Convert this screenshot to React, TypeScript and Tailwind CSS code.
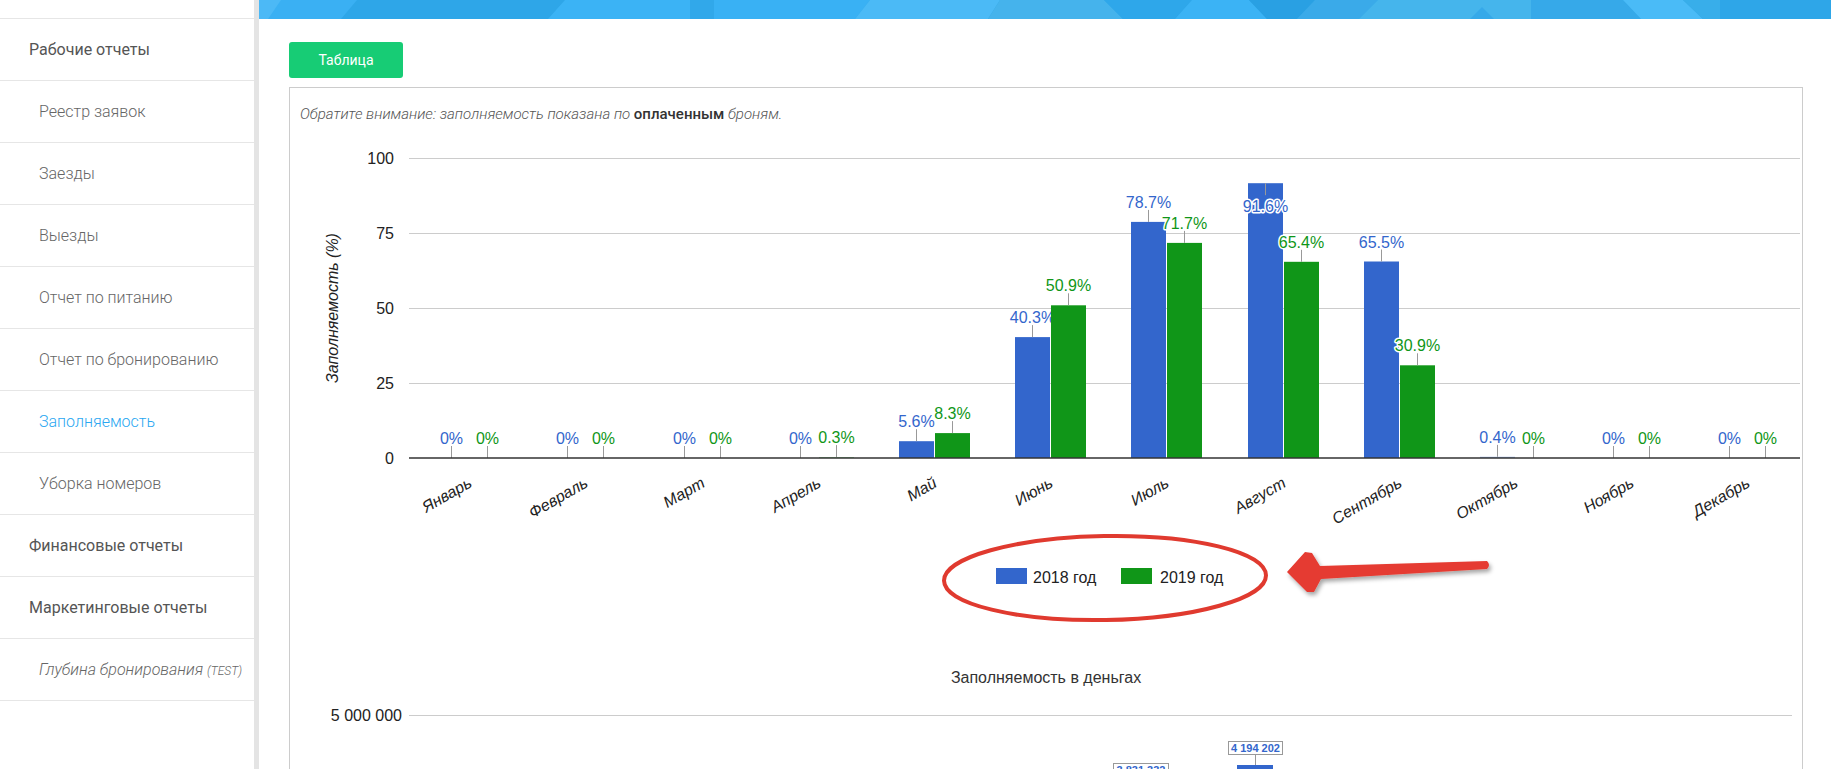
import React from "react";

const months = ["Январь","Февраль","Март","Апрель","Май","Июнь","Июль","Август","Сентябрь","Октябрь","Ноябрь","Декабрь"];
const d2018 = [0,0,0,0,5.6,40.3,78.7,91.6,65.5,0.4,0,0];
const d2019 = [0,0,0,0.3,8.3,50.9,71.7,65.4,30.9,0,0,0];
const BLUE = "#3366cc";
const GREEN = "#109618";
const BASE = 458;
const SX = 411;
const SW = 116.2;
const CF = '"Liberation Sans", Arial, sans-serif';

type NavItem = { t: string; h?: boolean; active?: boolean; test?: boolean };
const nav: NavItem[] = [
  { t: "Рабочие отчеты", h: true },
  { t: "Реестр заявок" },
  { t: "Заезды" },
  { t: "Выезды" },
  { t: "Отчет по питанию" },
  { t: "Отчет по бронированию" },
  { t: "Заполняемость", active: true },
  { t: "Уборка номеров" },
  { t: "Финансовые отчеты", h: true },
  { t: "Маркетинговые отчеты", h: true },
  { t: "Глубина бронирования", test: true },
];

const bannerPolys: [string, string][] = [
  ["259,0 357,0 341,19 259,19", "#3ab0f3"],
  ["259,0 281,0 268,19 259,19", "#4cb9f6"],
  ["565,0 690,0 690,19 548,19", "#3bb3f5"],
  ["690,0 714,0 714,19 690,19", "#31a8ea"],
  ["714,0 870,0 855,19 714,19", "#39b1f4"],
  ["870,0 1000,0 988,19 855,19", "#4bbaf6"],
  ["1000,0 1104,0 1123,19 988,19", "#45b3ec"],
  ["1104,0 1192,0 1175,19 1123,19", "#2ea7ea"],
  ["1192,0 1249,0 1267,19 1175,19", "#3bb3f5"],
  ["1249,0 1315,0 1297,19 1267,19", "#29a0e3"],
  ["1315,0 1378,0 1359,19 1297,19", "#3aaae9"],
  ["1378,0 1531,0 1531,19 1359,19", "#45b5ec"],
  ["1482,7 1494,19 1470,19", "#36a9e9"],
  ["1531,0 1623,0 1641,19 1531,19", "#36a9e9"],
  ["1623,0 1683,0 1703,19 1641,19", "#4abbf7"],
  ["1683,0 1720,0 1720,19 1703,19", "#38aeea"],
];

function Banner() {
  return (
    <svg width={1572} height={19} className="block shrink-0">
      <g transform="translate(-259,0)">
        <rect x={259} y={0} width={1572} height={19} fill="#2ea6e8" />
        {bannerPolys.map(([p, c], i) => (
          <polygon key={i} points={p} fill={c} />
        ))}
      </g>
    </svg>
  );
}

function Label({ x, y, text, color }: { x: number; y: number; text: string; color: string }) {
  return (
    <text
      x={x}
      y={y}
      textAnchor="middle"
      fill={color}
      stroke="#fff"
      strokeWidth={3}
      strokeLinejoin="round"
      style={{ paintOrder: "stroke" }}
      fontSize={16}
      fontFamily={CF}
    >
      {text}
    </text>
  );
}

function Chart() {
  const grid = [100, 75, 50, 25];
  const els: React.ReactNode[] = [];
  months.forEach((m, i) => {
    const c = Math.round(SX + SW * (i + 0.5));
    const series = [
      { v: d2018[i], x: c - 35, color: BLUE, lc: c - 17.5 },
      { v: d2019[i], x: c + 1, color: GREEN, lc: c + 18.5 },
    ];
    series.forEach((s, k) => {
      const h = s.v * 3;
      const top = BASE - h;
      if (s.v > 0) {
        els.push(<rect key={`b${i}${k}`} x={s.x} y={top} width={35} height={h} fill={s.color} opacity={s.v < 1 ? 0.5 : 1} />);
      }
      const inside = i === 7 && k === 0;
      const t = s.v === 0 ? "0%" : `${s.v}%`;
      if (inside) {
        els.push(<line key={`t${i}${k}`} x1={s.lc} x2={s.lc} y1={top} y2={top + 12} stroke="#999" strokeWidth={1} />);
        els.push(<Label key={`l${i}${k}`} x={s.lc} y={top + 29} text={t} color={s.color} />);
      } else {
        els.push(<line key={`t${i}${k}`} x1={s.lc} x2={s.lc} y1={top - 12} y2={top} stroke="#999" strokeWidth={1} />);
        els.push(<Label key={`l${i}${k}`} x={s.lc} y={top - 14} text={t} color={s.color} />);
      }
    });
    els.push(
      <text
        key={`m${i}`}
        x={c + 4}
        y={486}
        textAnchor="end"
        fontStyle="italic"
        fontSize={16}
        fill="#222"
        fontFamily={CF}
        transform={`rotate(-30 ${c + 4} 486)`}
      >
        {m}
      </text>
    );
  });

  return (
    <svg width={1512} height={645} className="block">
      <defs>
        <filter id="shadow" x="-20%" y="-50%" width="140%" height="200%">
          <feDropShadow dx="2" dy="3" stdDeviation="2" floodColor="#000" floodOpacity="0.35" />
        </filter>
      </defs>
      <g transform="translate(-290,-124)">
        {grid.map((g) => {
          const y = BASE - g * 3 + 0.5;
          return <line key={g} x1={409} x2={1800} y1={y} y2={y} stroke="#cccccc" strokeWidth={1} />;
        })}
        {[100, 75, 50, 25, 0].map((g) => (
          <text key={`y${g}`} x={394} y={BASE - g * 3 + 6} textAnchor="end" fontSize={16} fill="#222" fontFamily={CF}>
            {g}
          </text>
        ))}
        <text
          x={338}
          y={308}
          textAnchor="middle"
          fontStyle="italic"
          fontSize={16}
          fill="#222"
          fontFamily={CF}
          transform="rotate(-90 338 308)"
        >
          Заполняемость (%)
        </text>
        {els}
        <line x1={409} x2={1800} y1={BASE} y2={BASE} stroke="#333" strokeWidth={1.5} />

        {/* legend */}
        <rect x={996} y={568} width={31} height={16} fill={BLUE} />
        <text x={1033} y={583} fontSize={16} fill="#222" fontFamily={CF}>2018 год</text>
        <rect x={1121} y={568} width={31} height={16} fill={GREEN} />
        <text x={1160} y={583} fontSize={16} fill="#222" fontFamily={CF}>2019 год</text>

        {/* annotation: ellipse + arrow */}
        <ellipse cx={1105} cy={578} rx={161} ry={42} fill="none" stroke="#e03a2f" strokeWidth={4} transform="rotate(-1 1105 578)" />
        <path
          d="M1287 572 L1305 552 L1312 553 L1320 566 L1487 561 Q1491 565 1487 569 L1321 579 L1314 592 L1307 592 Z"
          fill="#e53b30"
          filter="url(#shadow)"
        />

        {/* second chart */}
        <text x={1046} y={683} textAnchor="middle" fontSize={16} fill="#333" fontFamily={CF}>Заполняемость в деньгах</text>
        <line x1={409} x2={1792} y1={715.5} y2={715.5} stroke="#cccccc" strokeWidth={1} />
        <text x={402} y={721} textAnchor="end" fontSize={16} fill="#222" fontFamily={CF}>5 000 000</text>

        <rect x={1228.5} y={741.5} width={54} height={13} fill="#fff" stroke="#999" strokeWidth={1} />
        <text x={1255.5} y={752} textAnchor="middle" fontSize={11} fontWeight="bold" fill={BLUE} fontFamily={CF}>4 194 202</text>
        <line x1={1255.5} x2={1255.5} y1={755} y2={765} stroke="#999" strokeWidth={1} />
        <rect x={1237} y={765} width={36} height={40} fill={BLUE} />

        <rect x={1113.5} y={763.5} width={55} height={13} fill="#fff" stroke="#999" strokeWidth={1} />
        <text x={1141} y={774} textAnchor="middle" fontSize={11} fontWeight="bold" fill={BLUE} fontFamily={CF}>3 831 332</text>
      </g>
    </svg>
  );
}

export default function App() {
  return (
    <div className="flex w-[1831px] h-[769px] overflow-hidden bg-white" style={{ fontFamily: "Roboto, 'Noto Sans', sans-serif" }}>
      <aside className="w-[259px] shrink-0 h-full border-r-[5px] border-[#e4e4e4] bg-white pt-[18px]">
        <ul className="border-t border-[#e6e6e6]">
          {nav.map((n) => (
            <li
              key={n.t}
              className={
                "h-[62px] border-b border-[#e6e6e6] flex items-center text-[16px] " +
                (n.h
                  ? "pl-[29px] text-[#555] font-normal"
                  : n.active
                  ? "pl-[39px] text-[#2aa7f1] font-light"
                  : "pl-[39px] text-[#666] font-light")
              }
            >
              {n.test ? (
                <span className="italic">
                  {n.t} <span className="text-[12px]">(TEST)</span>
                </span>
              ) : (
                n.t
              )}
            </li>
          ))}
        </ul>
      </aside>
      <main className="flex-1 flex flex-col min-w-0 h-full overflow-hidden">
        <Banner />
        <div className="shrink-0 pl-[30px] pt-[23px]">
          <button className="w-[114px] h-[36px] rounded-[3px] bg-[#17cc75] text-white text-[14px] font-normal">
            Таблица
          </button>
          <div className="mt-[9px] w-[1514px] h-[700px] border border-[#cccccc]">
            <p className="pt-[16px] px-[10px] leading-[20px] text-[15px] italic font-light text-[#555]">
              Обратите внимание: заполняемость показана по <b className="not-italic font-medium text-[#333]">оплаченным</b> броням.
            </p>
            <Chart />
          </div>
        </div>
      </main>
    </div>
  );
}
